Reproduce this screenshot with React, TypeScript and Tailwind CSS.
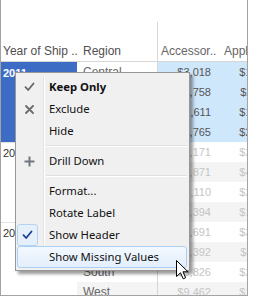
import React from "react";

type Row = [string, string, string];
const groups: { year: string; selected?: boolean; rows: Row[] }[] = [
  {
    year: "2011",
    selected: true,
    rows: [
      ["Central", "$3,018", "$1,542"],
      ["East", "$2,758", "$2,118"],
      ["South", "$1,611", "$1,903"],
      ["West", "$2,765", "$2,407"],
    ],
  },
  {
    year: "2012",
    rows: [
      ["Central", "$4,171", "$2,031"],
      ["East", "$3,871", "$4,286"],
      ["South", "$2,110", "$2,654"],
      ["West", "$4,394", "$1,872"],
    ],
  },
  {
    year: "2013",
    rows: [
      ["Central", "$3,691", "$3,205"],
      ["East", "$5,392", "$4,117"],
      ["South", "$3,826", "$2,560"],
      ["West", "$9,462", "$1,988"],
    ],
  },
];

const Check = ({ color }: { color: string }) => (
  <svg width="11" height="10" viewBox="0 0 11 10">
    <path d="M1.5 5.2 L4.2 8 L9.5 1.5" fill="none" stroke={color} strokeWidth="1.8" strokeLinecap="round" strokeLinejoin="round" />
  </svg>
);

const Cross = () => (
  <svg width="9" height="9" viewBox="0 0 9 9">
    <path d="M1 1 L8 8 M8 1 L1 8" fill="none" stroke="#6b6b6b" strokeWidth="1.8" strokeLinecap="round" />
  </svg>
);

const Plus = () => (
  <svg width="11" height="11" viewBox="0 0 11 11">
    <path d="M5.5 0.5 V10.5 M0.5 5.5 H10.5" fill="none" stroke="#707782" strokeWidth="2" />
  </svg>
);

function Item({
  label,
  icon,
  bold,
  checkedBox,
  highlight,
}: {
  label: string;
  icon?: React.ReactNode;
  bold?: boolean;
  checkedBox?: boolean;
  highlight?: boolean;
}) {
  if (highlight) {
    return (
      <div className="h-[22px] flex items-center rounded-[3px] border border-[#a9d0f2] bg-gradient-to-b from-[#f2f8fe] to-[#e3effc]">
        <div className="w-[27px]" />
        <span className="pl-[4px] text-[11.3px] text-[#111] leading-none whitespace-nowrap">{label}</span>
      </div>
    );
  }
  return (
    <div className="h-[22px] flex items-stretch">
      <div className="w-[24px] flex items-center justify-center">
        {checkedBox ? (
          <div className="w-[21px] h-[22px] shrink-0 ml-[-3px] flex items-center justify-center rounded-[3px] border border-[#b5d3f3] bg-[#e6f0fb]">
            <Check color="#1d3f94" />
          </div>
        ) : (
          icon
        )}
      </div>
      <div className="w-[2px]" />
      <div className="w-[1px] bg-[#e2e3e3]" />
      <div className="w-[1px] bg-white" />
      <div className={`pl-[4px] flex items-center text-[11.3px] text-[#111] leading-none whitespace-nowrap ${bold ? "font-bold" : ""}`}>{label}</div>
    </div>
  );
}

function Sep() {
  return (
    <div className="h-[8px] flex items-stretch">
      <div className="w-[26px]" />
      <div className="w-[1px] bg-[#e2e3e3]" />
      <div className="w-[1px] bg-white" />
      <div className="flex-1 flex flex-col justify-center pl-[1px]">
        <div className="h-[1px] bg-[#e0e0e0]" />
        <div className="h-[1px] bg-white" />
      </div>
    </div>
  );
}

export default function App() {
  return (
    <div className="w-[256px] h-[301px] bg-white relative overflow-hidden" style={{ fontFamily: '"Liberation Sans", Arial, sans-serif' }}>
      <div className="w-[248px] h-[296px] border-l border-r border-b border-[#a3a3a3] overflow-hidden">
        <div className="w-[400px]">
          {/* top blank area */}
          <div className="h-[41px] flex">
            <div className="w-[156px]" />
            <div className="flex-1 mt-[22px] border-l border-[#d6d6d6]" />
          </div>
          {/* header */}
          <div className="h-[21px] flex border-b border-[#d6d6d6] text-[12px] text-[#4f4f4f] whitespace-nowrap">
            <div className="w-[76px] pl-[2px] flex items-center overflow-hidden">Year of Ship ..</div>
            <div className="w-[80px] pl-[6px] flex items-center">Region</div>
            <div className="w-[64px] pl-[3px] border-l border-[#d6d6d6] flex items-center text-[#666]">Accessor..</div>
            <div className="flex-1 pl-[3px] flex items-center text-[#666]">Appliances</div>
          </div>
          {/* body */}
          {groups.map((g, gi) => (
            <div key={g.year} className="flex">
              <div
                className={`w-[76px] h-[80px] pl-[2px] pt-[3px] text-[11px] ${
                  g.selected ? "bg-[#3d6cc4] text-white font-bold" : "text-[#333]"
                } ${gi > 0 ? "shadow-[inset_0_1px_0_#e2e2e2]" : ""}`}
              >
                {g.year}
              </div>
              <div className="flex-1">
                {g.rows.map((r, ri) => {
                  const odd = ri % 2 === 1;
                  const rowBg = odd ? "bg-[#f4f4f4]" : "bg-white";
                  const dataBg = g.selected ? "bg-[#cfe7fb]" : rowBg;
                  const dataColor = g.selected ? "text-[#555]" : "text-[#c4c4c4]";
                  return (
                    <div key={ri} className={`h-[20px] flex text-[11px] whitespace-nowrap ${gi > 0 && ri === 0 ? "shadow-[inset_0_1px_0_#e2e2e2]" : ""}`}>
                      <div className={`w-[80px] pl-[6px] flex items-center text-[12px] text-[#666] ${rowBg}`}>{r[0]}</div>
                      <div className={`w-[64px] pr-[10px] flex items-center justify-end border-l border-[#d6d6d6] ${dataBg} ${dataColor}`}>{r[1]}</div>
                      <div className={`w-[62px] pr-[10px] flex items-center justify-end ${dataBg} ${dataColor}`}>{r[2]}</div>
                    </div>
                  );
                })}
              </div>
            </div>
          ))}
        </div>
      </div>

      {/* context menu */}
      <div
        className="absolute left-[15px] top-[72px] w-[175px] border border-[#979797] bg-[#f0f0f0] pt-[3px] pb-[2px] pl-[1px] pr-[2px] shadow-[3px_3px_3px_rgba(0,0,0,0.4)]"
        style={{ fontFamily: '"Noto Sans", "Open Sans", sans-serif' }}
      >
        <Item label="Keep Only" bold icon={<Check color="#666" />} />
        <Item label="Exclude" icon={<Cross />} />
        <Item label="Hide" />
        <Sep />
        <Item label="Drill Down" icon={<Plus />} />
        <Sep />
        <Item label="Format..." />
        <Item label="Rotate Label" />
        <Item label="Show Header" checkedBox />
        <Item label="Show Missing Values" highlight />
      </div>

      {/* cursor */}
      <svg className="absolute left-[176px] top-[260px]" width="13" height="20" viewBox="0 0 13 20">
        <path d="M0.5 0.5 L0.5 16.5 L4.5 12.8 L7.2 18.8 L9.6 17.8 L7 11.8 L12 11.8 Z" fill="white" stroke="black" strokeWidth="1" strokeLinejoin="miter" />
      </svg>
    </div>
  );
}
